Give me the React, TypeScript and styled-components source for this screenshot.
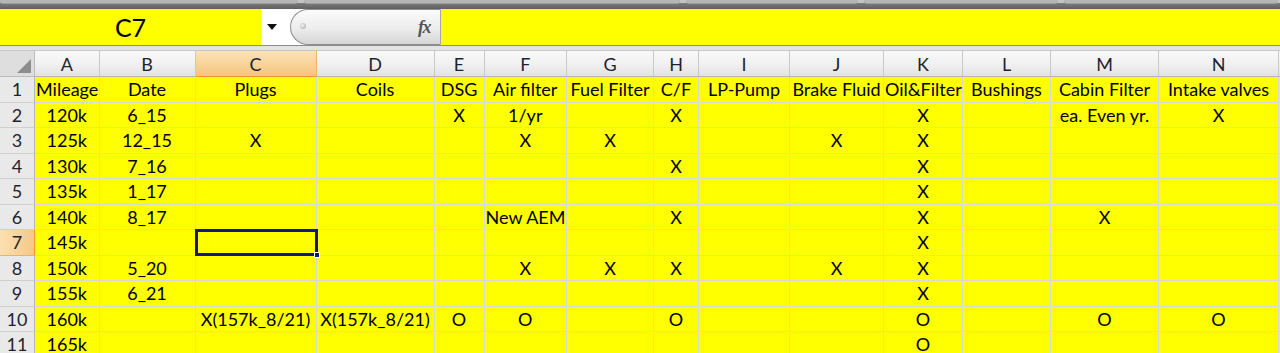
import * as React from 'react';
import styled, { createGlobalStyle } from 'styled-components';

const GlobalStyle = createGlobalStyle`
  html, body {
    margin: 0;
    padding: 0;
    background: #fff;
    font-family: Lato, "Open Sans", sans-serif;
  }
`;

const COLS = ['A', 'B', 'C', 'D', 'E', 'F', 'G', 'H', 'I', 'J', 'K', 'L', 'M', 'N', ''];
const WIDTHS = [64.5, 96, 121, 118, 50, 82.5, 87, 45, 91, 94, 79, 88, 108, 120, 60];

const ROWS: string[][] = [
  ['Mileage', 'Date', 'Plugs', 'Coils', 'DSG', 'Air filter', 'Fuel Filter', 'C/F', 'LP-Pump', 'Brake Fluid', 'Oil&Filter', 'Bushings', 'Cabin Filter', 'Intake valves', ''],
  ['120k', '6_15', '', '', 'X', '1/yr', '', 'X', '', '', 'X', '', 'ea. Even yr.', 'X', ''],
  ['125k', '12_15', 'X', '', '', 'X', 'X', '', '', 'X', 'X', '', '', '', ''],
  ['130k', '7_16', '', '', '', '', '', 'X', '', '', 'X', '', '', '', ''],
  ['135k', '1_17', '', '', '', '', '', '', '', '', 'X', '', '', '', ''],
  ['140k', '8_17', '', '', '', 'New AEM', '', 'X', '', '', 'X', '', 'X', '', ''],
  ['145k', '', '', '', '', '', '', '', '', '', 'X', '', '', '', ''],
  ['150k', '5_20', '', '', '', 'X', 'X', 'X', '', 'X', 'X', '', '', '', ''],
  ['155k', '6_21', '', '', '', '', '', '', '', '', 'X', '', '', '', ''],
  ['160k', '', 'X(157k_8/21)', 'X(157k_8/21)', 'O', 'O', '', 'O', '', '', 'O', '', 'O', 'O', ''],
  ['165k', '', '', '', '', '', '', '', '', '', 'O', '', '', '', ''],
];

const SEL_COL = 2;
const SEL_ROW = 6;

const Page = styled.div`
  width: 1280px;
  height: 353px;
  overflow: hidden;
  background: #fff;
`;

const RibbonEdge = styled.div`
  height: 9px;
  display: flex;
  gap: 6px;
  background: linear-gradient(#c4c4c4 0, #c4c4c4 3px, #7b7b7b 3px, #5f5f5f 9px);
`;

const RibbonTab = styled.div<{ $w: number }>`
  width: ${(p) => p.$w}px;
  height: 3px;
  background: #b5b5b5;
  border-radius: 0 0 3px 3px;
  border-bottom: 1px solid #9c9c9c;
`;

const FormulaRow = styled.div`
  height: 36px;
  display: flex;
`;

const NameBox = styled.div`
  width: 261px;
  background: #ffff00;
  display: flex;
  align-items: center;
  justify-content: center;
  font-size: 25px;
  color: #000;
`;

const Dropdown = styled.div`
  width: 29px;
  background: #fff;
  display: flex;
  align-items: center;
  justify-content: flex-start;
  padding-left: 6px;
  box-sizing: border-box;
`;

const Caret = styled.div`
  width: 0;
  height: 0;
  border-left: 5px solid transparent;
  border-right: 5px solid transparent;
  border-top: 6px solid #111;
`;

const FxBox = styled.div`
  width: 151px;
  box-sizing: border-box;
  border: 1px solid #8e8e8e;
  border-right: 1px solid #a8a8a8;
  border-radius: 18px 0 0 18px;
  background: linear-gradient(#fbfbfb, #ececec 55%, #d6d6d6);
  display: flex;
  align-items: center;
  justify-content: space-between;
  padding: 0 10px 0 9px;
`;

const Dot = styled.div`
  width: 6px;
  height: 6px;
  border-radius: 50%;
  background: radial-gradient(circle at 40% 40%, #f4f4f4, #a0a0a0);
  margin-top: -2px;
`;

const Fx = styled.span`
  font-family: "Liberation Serif", serif;
  font-style: italic;
  font-weight: bold;
  font-size: 18px;
  color: #555;
  letter-spacing: -1.5px;
`;

const FormulaInput = styled.div`
  flex: 1;
  background: #ffff00;
`;

const Divider = styled.div`
  height: 5px;
  box-sizing: border-box;
  border-top: 1px solid #8c8c8c;
  background: #e4e4e4;
`;

const Grid = styled.div`
  display: grid;
  grid-template-columns: 35px ${WIDTHS.map((w) => `${w}px`).join(' ')};
  grid-template-rows: 26px repeat(11, 25.5px);
  border-top: 1px solid #c8c8c8;
`;

const Corner = styled.div`
  position: relative;
  background: #dedede;
  border-right: 1px solid #bcbcbc;
  border-bottom: 1px solid #bcbcbc;
  box-sizing: border-box;
  &::after {
    content: '';
    position: absolute;
    right: 3px;
    bottom: 3px;
    width: 0;
    height: 0;
    border-left: 14px solid transparent;
    border-bottom: 14px solid #8d8d8d;
  }
`;

const ColHead = styled.div<{ $active?: boolean }>`
  box-sizing: border-box;
  border-right: 1px solid ${(p) => (p.$active ? '#e9b36a' : '#c9c9c9')};
  border-bottom: 1px solid ${(p) => (p.$active ? '#f29436' : '#b7b7b7')};
  background: ${(p) =>
    p.$active
      ? 'linear-gradient(#fbe3b8, #f8d49a 50%, #f4c57f)'
      : 'linear-gradient(#f9f9f9, #f1f1f1 50%, #e3e3e3)'};
  display: flex;
  align-items: center;
  justify-content: center;
  font-size: 18px;
  color: #1d2430;
`;

const RowHead = styled.div<{ $active?: boolean }>`
  box-sizing: border-box;
  border-right: 1px solid ${(p) => (p.$active ? '#f29436' : '#b7b7b7')};
  border-bottom: 1px solid ${(p) => (p.$active ? '#e9b36a' : '#cfcfcf')};
  background: ${(p) => (p.$active ? 'linear-gradient(90deg, #fbe0b0, #f5c886)' : '#e9e9e9')};
  display: flex;
  align-items: center;
  justify-content: center;
  font-size: 18px;
  color: #1d2430;
`;

const Cell = styled.div<{ $selected?: boolean }>`
  position: relative;
  box-sizing: border-box;
  background: #ffff00;
  border-right: 1px solid #d9d9d9;
  border-bottom: 1px solid #d9d9d9;
  font-size: 18px;
  color: #000;
  text-align: center;
  white-space: nowrap;
  overflow: ${(p) => (p.$selected ? 'visible' : 'hidden')};
  line-height: 25px;
  padding: 0 1px;
  z-index: ${(p) => (p.$selected ? 2 : 0)};
  ${(p) =>
    p.$selected &&
    `
    &::before {
      content: '';
      position: absolute;
      left: -1px;
      top: -1px;
      right: -2px;
      bottom: -1px;
      border: 3px solid #14148e;
      box-sizing: border-box;
    }
    &::after {
      content: '';
      position: absolute;
      right: -4px;
      bottom: -3px;
      width: 6px;
      height: 6px;
      background: #14148e;
      border: 1px solid #fff;
      box-sizing: border-box;
    }
  `}
`;

const App: React.FC = () => (
  <Page>
    <GlobalStyle />
    <RibbonEdge>
      <RibbonTab $w={298} />
      <RibbonTab $w={376} />
      <RibbonTab $w={172} />
      <RibbonTab $w={194} />
      <RibbonTab $w={214} />
    </RibbonEdge>
    <FormulaRow>
      <NameBox>C7</NameBox>
      <Dropdown>
        <Caret />
      </Dropdown>
      <FxBox>
        <Dot />
        <Fx>fx</Fx>
      </FxBox>
      <FormulaInput />
    </FormulaRow>
    <Divider />
    <Grid>
      <Corner />
      {COLS.map((c, i) => (
        <ColHead key={i} $active={i === SEL_COL}>
          {c}
        </ColHead>
      ))}
      {ROWS.map((row, r) => (
        <React.Fragment key={r}>
          <RowHead $active={r === SEL_ROW}>{r + 1}</RowHead>
          {row.map((v, c) => (
            <Cell key={c} $selected={r === SEL_ROW && c === SEL_COL}>
              {v}
            </Cell>
          ))}
        </React.Fragment>
      ))}
    </Grid>
  </Page>
);

export default App;
